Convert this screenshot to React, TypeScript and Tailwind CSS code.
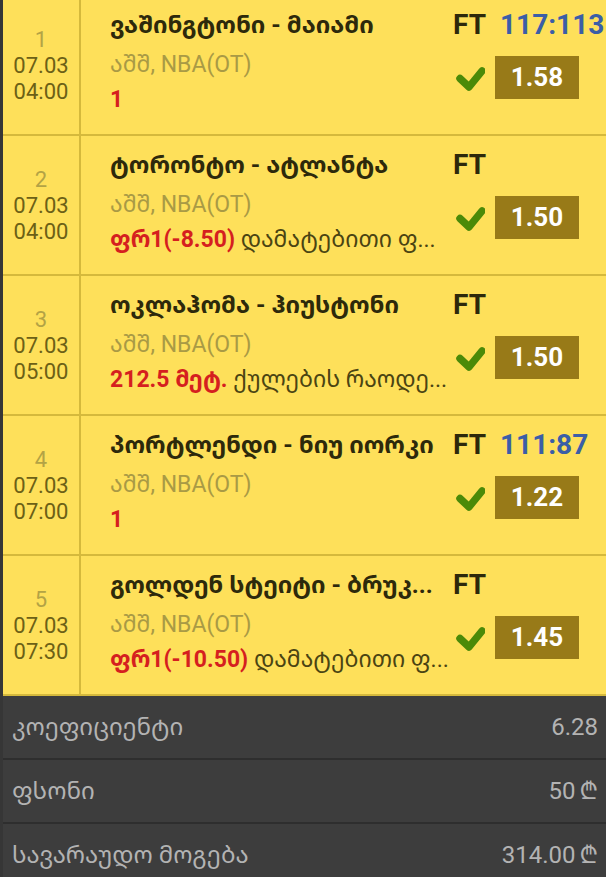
import React from "react";

type Row = {
  idx: number;
  date: string;
  time: string;
  title: string;
  pick: string;
  desc?: string;
  score?: string;
  odds: string;
};

const rows: Row[] = [
  { idx: 1, date: "07.03", time: "04:00", title: "ვაშინგტონი - მაიამი", pick: "1", score: "117:113", odds: "1.58" },
  { idx: 2, date: "07.03", time: "04:00", title: "ტორონტო - ატლანტა", pick: "ფრ1(-8.50)", desc: "დამატებითი ფ...", odds: "1.50" },
  { idx: 3, date: "07.03", time: "05:00", title: "ოკლაჰომა - ჰიუსტონი", pick: "212.5 მეტ.", desc: "ქულების რაოდე...", odds: "1.50" },
  { idx: 4, date: "07.03", time: "07:00", title: "პორტლენდი - ნიუ იორკი", pick: "1", score: "111:87", odds: "1.22" },
  { idx: 5, date: "07.03", time: "07:30", title: "გოლდენ სტეიტი - ბრუკ...", pick: "ფრ1(-10.50)", desc: "დამატებითი ფ...", odds: "1.45" },
];

const FONT = "font-['Roboto','Noto_Sans_Georgian','DejaVu_Sans','Noto_Sans',sans-serif]";

function Check() {
  return (
    <svg width="30" height="26" viewBox="0 0 30 26" className="shrink-0">
      <path d="M5 13.5 L14 22 L27 6" fill="none" stroke="#4b8a08" strokeWidth="7.5" strokeLinejoin="round" strokeLinecap="round" />
    </svg>
  );
}

function BetRow({ r }: { r: Row }) {
  return (
    <div className="flex h-[140px] border-b-2 border-[#d5b93c]">
      <div className="w-[78px] shrink-0 border-r-2 border-[#d5b93c] flex flex-col items-center pt-[31px] text-[22px] leading-[26px]">
        <div className="text-[#b3a345]">{r.idx}</div>
        <div className="text-[#6c6016]">{r.date}</div>
        <div className="text-[#6c6016]">{r.time}</div>
      </div>
      <div className="w-[372px] shrink-0 pl-[29px] pt-[11px] flex flex-col overflow-hidden">
        <div className="text-[24px] leading-[36px] font-bold text-[#2d290b] whitespace-nowrap">{r.title}</div>
        <div className="text-[23px] leading-[34px] mt-[5px] text-[#a99a45] whitespace-nowrap">აშშ, NBA(OT)</div>
        <div className="text-[23px] leading-[34px] mt-[1px] whitespace-nowrap">
          <span className="font-bold text-[#d51f1f]">{r.pick}</span>
          {r.desc && <span className="text-[#4a4412]"> {r.desc}</span>}
        </div>
      </div>
      <div className="flex-1 pt-[11px] flex flex-col">
        <div className="flex items-center gap-[14px] h-[36px] leading-[36px] whitespace-nowrap">
          <span className="text-[28px] font-bold text-[#2d290b]">FT</span>
          {r.score && <span className="text-[28px] font-bold text-[#3b5ea7]">{r.score}</span>}
        </div>
        <div className="flex items-center mt-[13px] pl-[2px] gap-[10px]">
          <Check />
          <div className="w-[84px] h-[43px] bg-[#987a18] flex items-center justify-center text-white font-bold text-[26px]">
            {r.odds}
          </div>
        </div>
      </div>
    </div>
  );
}

function FooterRow({ label, value, lari }: { label: string; value: string; lari?: boolean }) {
  return (
    <div className="h-[64px] shrink-0 border-b-2 border-[#2e2e2e] flex items-center justify-between pl-[9px] pr-[8px] text-[24px] text-[#b3b3b3]">
      <span>{label}</span>
      <span>
        {value}
        {lari && <span className="ml-[4px]">₾</span>}
      </span>
    </div>
  );
}

export default function App() {
  return (
    <div className={`w-[606px] h-[877px] overflow-hidden flex bg-[#3d3d3d] ${FONT}`}>
      <div className="w-[3px] shrink-0 bg-[#363636]" />
      <div className="flex-1 flex flex-col min-w-0">
        <div className="bg-[#fee05a] -mt-[4px]">
          {rows.map((r) => (
            <BetRow key={r.idx} r={r} />
          ))}
        </div>
        <FooterRow label="კოეფიციენტი" value="6.28" />
        <FooterRow label="ფსონი" value="50" lari />
        <FooterRow label="სავარაუდო მოგება" value="314.00" lari />
      </div>
    </div>
  );
}
